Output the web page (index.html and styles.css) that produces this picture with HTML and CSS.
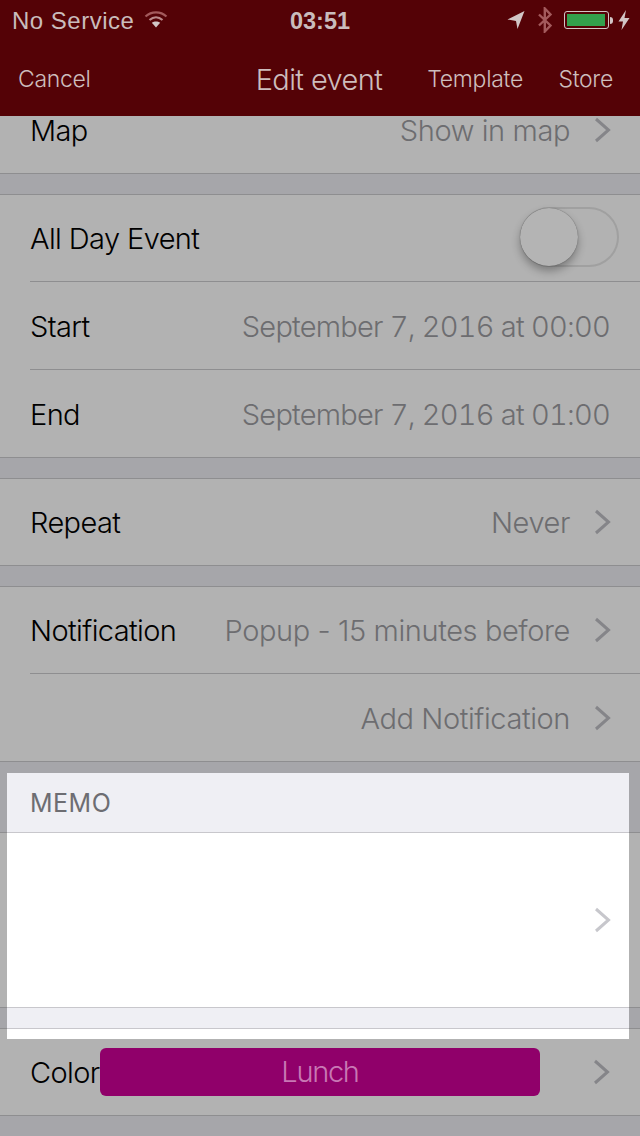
FILE: index.html
```html
<!DOCTYPE html>
<html lang="en">
<head>
    <meta charset="UTF-8">
    <meta name="viewport" content="width=device-width, initial-scale=1.0">
    <title>Edit event</title>
    <link rel="stylesheet" href="styles.css">
</head>
<body>
    <header class="top-bar">
        <div class="status-bar">
            <div class="status-left">
                <span>No Service</span>
                <svg class="wifi" width="24" height="18" viewBox="0 0 24 18">
                    <path d="M1.5 6.5C7.5 1 16.500 1 22.500 6.500" fill="none" stroke="#a35a5c" stroke-width="2.200"/>
                    <path d="M5.500 10C9.500 6.500 14.500 6.500 18.500 10" fill="none" stroke="#b98a8b" stroke-width="2.200"/>
                    <path d="M12 17.500L7.800 12.800C10.300 10.900 13.700 10.900 16.200 12.800Z" fill="#d2c6c6"/>
                </svg>
            </div>
            <div class="status-time">03:51</div>
            <div class="status-right">
                <svg width="18" height="20" viewBox="0 0 18 20">
                    <path d="M0.500 9.500L17.500 1L10.500 19L9 11Z" fill="#d2c6c6"/>
                </svg>
                <svg class="bluetooth" width="16" height="26" viewBox="0 0 16 26">
                    <path d="M2 7.500L13.500 18.500L7.800 24.500V1.500L13.500 7.500L2 18.500" fill="none" stroke="#a35a5c" stroke-width="2.400"/>
                </svg>
                <div class="battery"><div class="battery-fill"></div></div>
                <div class="battery-tip"></div>
                <svg class="bolt" width="12" height="20" viewBox="0 0 12 20">
                    <path d="M8 0L0.500 11.500H5L3.500 20L11.500 8H6.500Z" fill="#d2c6c6"/>
                </svg>
            </div>
        </div>
        <nav class="nav-bar">
            <span class="nav-cancel">Cancel</span>
            <span class="nav-title">Edit event</span>
            <span class="nav-template">Template</span>
            <span class="nav-store">Store</span>
        </nav>
    </header>

    <main class="list">
        <section class="group group-first">
            <div class="row">
                <span class="row-label">Map</span>
                <span class="row-value">Show in map</span>
                <svg class="chevron" width="17" height="26" viewBox="0 0 17 26"><path d="M2 2L14.500 13L2 24" /></svg>
            </div>
        </section>

        <section class="group">
            <div class="row row-line">
                <span class="row-label">All Day Event</span>
                <div class="toggle"><div class="toggle-knob"></div></div>
            </div>
            <div class="row row-line">
                <span class="row-label">Start</span>
                <span class="row-value row-date">September 7, 2016 at 00:00</span>
            </div>
            <div class="row">
                <span class="row-label">End</span>
                <span class="row-value row-date">September 7, 2016 at 01:00</span>
            </div>
        </section>

        <section class="group">
            <div class="row">
                <span class="row-label">Repeat</span>
                <span class="row-value">Never</span>
                <svg class="chevron" width="17" height="26" viewBox="0 0 17 26"><path d="M2 2L14.500 13L2 24" /></svg>
            </div>
        </section>

        <section class="group">
            <div class="row row-line">
                <span class="row-label">Notification</span>
                <span class="row-value">Popup - 15 minutes before</span>
                <svg class="chevron" width="17" height="26" viewBox="0 0 17 26"><path d="M2 2L14.500 13L2 24" /></svg>
            </div>
            <div class="row">
                <span class="row-value">Add Notification</span>
                <svg class="chevron" width="17" height="26" viewBox="0 0 17 26"><path d="M2 2L14.500 13L2 24" /></svg>
            </div>
        </section>

        <section class="group group-memo"></section>

        <section class="group">
            <div class="row">
                <span class="row-label color-label">Color</span>
                <div class="color-badge">Lunch</div>
                <svg class="chevron" width="17" height="26" viewBox="0 0 17 26"><path d="M2 2L14.500 13L2 24" /></svg>
            </div>
        </section>
    </main>

    <!-- Undimmed window over the list -->
    <div class="spotlight">
        <div class="memo-header">MEMO</div>
        <div class="memo-body">
            <svg class="chevron" width="17" height="26" viewBox="0 0 17 26"><path d="M2 2L14.500 13L2 24" /></svg>
        </div>
        <div class="memo-gap"></div>
    </div>
</body>
</html>
```

FILE: styles.css
```css
html, body {
    margin: 0;
    height: 1136px;
    overflow: hidden;
}
body {
    position: relative;
    font-family: Inter, "Liberation Sans", sans-serif;
    background-color: #a6a6aa;
}

.top-bar {
    position: relative;
    z-index: 2;
    height: 116px;
    background-color: #540206;
    color: #cdbdbd;
}
.status-bar {
    height: 42px;
    display: flex;
    align-items: center;
    justify-content: space-between;
    padding: 0 10px 0 12px;
    font-family: "Liberation Sans", sans-serif;
    font-size: 24px;
    color: #c9bcbc;
}
.status-left {
    display: flex;
    align-items: center;
    gap: 10px;
    width: 200px;
}
.status-left span {
    letter-spacing: 0.5px;
}
.wifi {
    margin-top: -4px;
}
.status-time {
    margin-left: -2px;
    font-weight: bold;
    font-size: 23.500px;
}
.status-right {
    width: 200px;
    margin-top: -2px;
    display: flex;
    align-items: center;
    justify-content: flex-end;
}
.bluetooth {
    margin-left: 12px;
}
.battery {
    width: 45px;
    height: 18px;
    box-sizing: border-box;
    margin-left: 11px;
    border: 1px solid #d2c6c6;
    border-radius: 3px;
    padding: 2px 3px 2px 2px;
}
.battery-fill {
    height: 100%;
    background-color: #33a04c;
}
.battery-tip {
    width: 3px;
    height: 7px;
    margin-left: 1px;
    background-color: #d2c6c6;
    border-radius: 0 3px 3px 0;
}
.bolt {
    margin-left: 5px;
}
.nav-bar {
    height: 74px;
    display: flex;
    align-items: center;
    padding: 0 27px 0 18px;
    font-weight: 300;
    font-size: 23px;
    letter-spacing: -0.3px;
}
.nav-title {
    margin-left: 165px;
    font-size: 29px;
    letter-spacing: -0.6px;
}
.nav-template {
    margin-left: 45px;
}
.nav-store {
    margin-left: auto;
}

.list {
    margin-top: -29px;
}
.group {
    margin-bottom: 20px;
    background-color: #b2b2b2;
    border-top: 1px solid #8e8e90;
    border-bottom: 1px solid #8e8e90;
}
.group-first {
    border-top: none;
}
.group-memo {
    height: 174px;
    margin-top: 70px;
}
.row {
    position: relative;
    height: 87px;
    box-sizing: border-box;
    display: flex;
    align-items: center;
    padding: 0 30px;
    font-size: 29px;
    font-weight: 300;
}
.row:first-child {
    height: 86px;
}
.row + .row {
    padding-top: 1px;
}
.row-line {
    margin-bottom: 1px;
}
.row-line::after {
    content: "";
    position: absolute;
    left: 30px;
    right: 0;
    bottom: -1px;
    height: 1px;
    background-color: #8e8e90;
}
.row-label {
    color: #000;
    letter-spacing: -0.6px;
}
.row-value {
    margin-left: auto;
    color: #6d6d70;
    letter-spacing: -0.4px;
}
.row-date {
    font-variant-numeric: tabular-nums;
    letter-spacing: -0.76px;
}
.chevron {
    flex: none;
    margin: 0 -1px 0 24px;
    fill: none;
    stroke: #858589;
    stroke-width: 3;
}

.toggle {
    margin: -2px -9px 0 auto;
    width: 99px;
    height: 60px;
    box-sizing: border-box;
    border: 2px solid #a0a0a0;
    border-radius: 30px;
}
.toggle-knob {
    width: 58px;
    height: 58px;
    margin: -1px 0 0 -2px;
    border-radius: 50%;
    background-color: #b4b4b4;
    box-shadow: 0 5px 8px rgba(0, 0, 0, 0.3), 0 0 1px rgba(0, 0, 0, 0.5);
}

.color-label {
    width: 70px;
    flex: none;
}
.color-badge {
    width: 440px;
    height: 48px;
    flex: none;
    line-height: 48px;
    text-align: center;
    letter-spacing: -1.300px;
    color: #c878b4;
    background-color: #90006a;
    border-radius: 6px;
}
.color-badge + .chevron {
    margin-left: 53px;
}

.spotlight {
    position: absolute;
    left: 7px;
    top: 773px;
    width: 622px;
    height: 266px;
    overflow: hidden;
    background-color: #fff;
}
.memo-header {
    height: 60px;
    box-sizing: border-box;
    padding: 17px 23px 0;
    font-size: 25px;
    font-weight: 400;
    line-height: 26px;
    letter-spacing: 0.5px;
    color: #6d6d72;
    background-color: #efeff4;
    border-bottom: 1px solid #c8c7cc;
}
.memo-body {
    height: 175px;
    box-sizing: border-box;
    display: flex;
    align-items: center;
    justify-content: flex-end;
    padding-right: 19px;
    border-bottom: 1px solid #c8c7cc;
}
.memo-body .chevron {
    stroke: #c7c7cc;
}
.memo-gap {
    height: 21px;
    box-sizing: border-box;
    background-color: #efeff4;
    border-bottom: 1px solid #c8c7cc;
}
```
